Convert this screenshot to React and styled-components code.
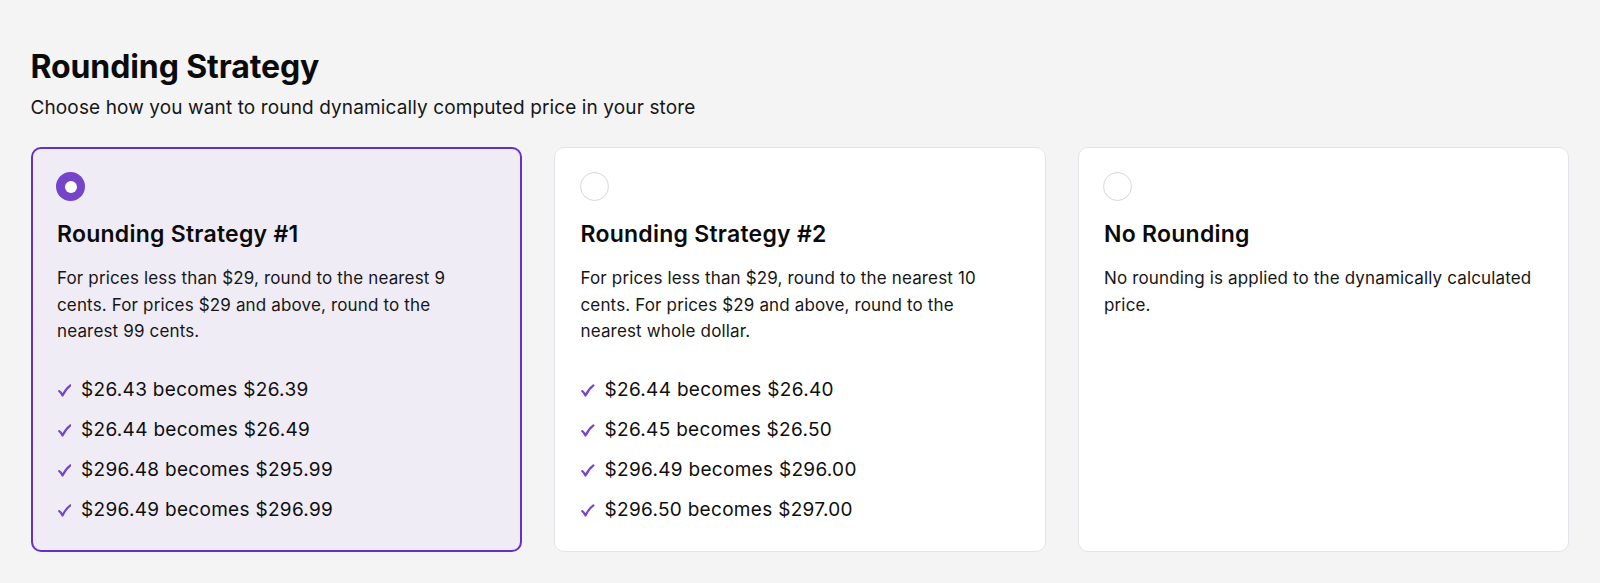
import React from "react";
import styled, { createGlobalStyle } from "styled-components";

const Global = createGlobalStyle`
  * { box-sizing: border-box; }
  body {
    margin: 0;
    background: #f4f4f4;
    font-family: Inter, "Noto Sans", sans-serif;
    color: #111;
  }
`;

const Page = styled.div`
  padding: 47px 31px 31px 30.5px;
`;

const Heading = styled.h1`
  margin: 0;
  font-size: 32px;
  line-height: 40px;
  font-weight: 700;
  letter-spacing: -0.1px;
  color: #0b0b0b;
`;

const Sub = styled.p`
  margin: 8px 0 0;
  font-size: 19px;
  line-height: 26px;
  letter-spacing: 0.12px;
  color: #161616;
`;

const Grid = styled.div`
  margin-top: 26px;
  display: grid;
  grid-template-columns: repeat(3, 1fr);
  gap: 32px;
`;

const Card = styled.div`
  height: 405px;
  border-radius: 10px;
  padding: ${(p) => (p.$active ? "23px 24.5px" : "24px 25.5px")};
  background: ${(p) => (p.$active ? "#efecf6" : "#ffffff")};
  border: ${(p) => (p.$active ? "2px solid #6430c6" : "1px solid #e1e4e8")};
  display: flex;
  flex-direction: column;
`;

const Radio = styled.span`
  width: 29px;
  height: 29px;
  flex: none;
  margin-left: -1px;
  border-radius: 50%;
  display: flex;
  align-items: center;
  justify-content: center;
  background: ${(p) => (p.$active ? "#7444c9" : "#fff")};
  border: ${(p) => (p.$active ? "none" : "1.5px solid #d3d8df")};
  &::after {
    content: "";
    display: ${(p) => (p.$active ? "block" : "none")};
    width: 12px;
    height: 12px;
    border-radius: 50%;
    background: #fff;
  }
`;

const Title = styled.h2`
  margin: 17px 0 0;
  font-size: 23px;
  line-height: 32px;
  font-weight: 600;
  letter-spacing: 0.25px;
  color: #0b0b0b;
`;

const Desc = styled.p`
  margin: 15px 0 0;
  font-size: 17px;
  line-height: 26.5px;
  letter-spacing: 0.15px;
  color: #161616;
`;

const List = styled.ul`
  list-style: none;
  margin: 32px 0 0;
  padding: 0;
  display: flex;
  flex-direction: column;
  gap: 14px;
`;

const Item = styled.li`
  display: flex;
  align-items: center;
  font-size: 19px;
  line-height: 26px;
  letter-spacing: 0.3px;
  color: #0e0e0e;
`;

const CheckIcon = styled.svg`
  width: 13.5px;
  height: 13px;
  margin: 1px 10px 0 0.5px;
  flex: none;
  color: #7444c9;
`;

const Check = () => (
  <CheckIcon viewBox="0 0 15 14">
    <path
      d="M1.4 7.8 C2.8 8.8 3.9 10.4 5 12.6 C7 8.2 9.8 4.2 13.8 1.2"
      fill="none"
      stroke="currentColor"
      strokeWidth="2.4"
      strokeLinecap="round"
      strokeLinejoin="round"
    />
  </CheckIcon>
);

const cards = [
  {
    title: "Rounding Strategy #1",
    desc: "For prices less than $29, round to the nearest 9 cents. For prices $29 and above, round to the nearest 99 cents.",
    items: [
      "$26.43 becomes $26.39",
      "$26.44 becomes $26.49",
      "$296.48 becomes $295.99",
      "$296.49 becomes $296.99",
    ],
    active: true,
  },
  {
    title: "Rounding Strategy #2",
    desc: "For prices less than $29, round to the nearest 10 cents. For prices $29 and above, round to the nearest whole dollar.",
    items: [
      "$26.44 becomes $26.40",
      "$26.45 becomes $26.50",
      "$296.49 becomes $296.00",
      "$296.50 becomes $297.00",
    ],
  },
  {
    title: "No Rounding",
    desc: "No rounding is applied to the dynamically calculated price.",
    items: [],
  },
];

export default function App() {
  return (
    <>
      <Global />
      <Page>
        <Heading>Rounding Strategy</Heading>
        <Sub>Choose how you want to round dynamically computed price in your store</Sub>
        <Grid>
          {cards.map((c) => (
            <Card key={c.title} $active={c.active}>
              <Radio $active={c.active} />
              <Title>{c.title}</Title>
              <Desc>{c.desc}</Desc>
              {c.items.length > 0 && (
                <List>
                  {c.items.map((i) => (
                    <Item key={i}>
                      <Check />
                      {i}
                    </Item>
                  ))}
                </List>
              )}
            </Card>
          ))}
        </Grid>
      </Page>
    </>
  );
}
